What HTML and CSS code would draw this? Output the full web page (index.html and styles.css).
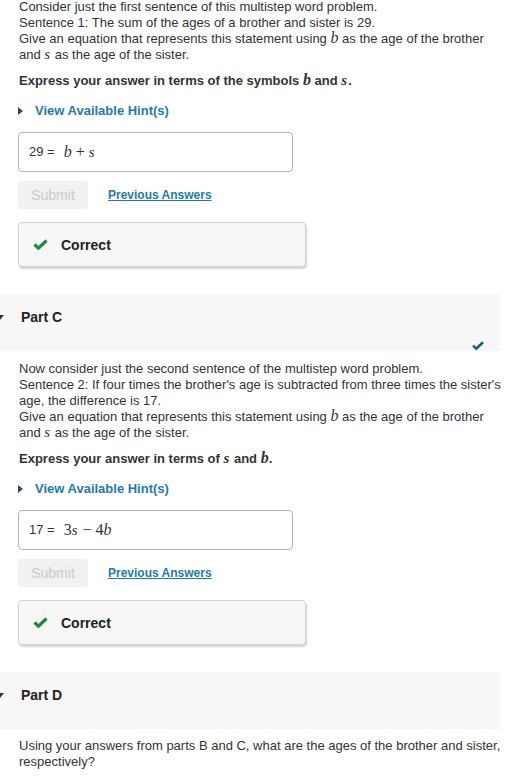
FILE: index.html
```html
<!DOCTYPE html>
<html lang="en">
<head>
<meta charset="utf-8">
<title>Multistep word problem</title>
<link rel="stylesheet" href="styles.css">
</head>
<body>
<div class="page">
  <section class="part-body first">
    <p class="prompt">Consider just the first sentence of this multistep word problem.<br>Sentence 1: The sum of the ages of a brother and sister is 29.<br>Give an equation that represents this statement using <var class="mi">b</var> as the age of the brother and <var class="mi s">s</var> as the age of the sister.</p>
    <p class="express">Express your answer in terms of the symbols <var class="mi">b</var> and <var class="mi s">s</var>.</p>
    <a class="hint" href="#"><span class="hint-caret"></span>View Available Hint(s)</a>
    <div class="answer-box"><span class="lhs">29 =</span><span class="math"><var class="mi">b</var><span class="mo">+</span><var class="mi s">s</var></span></div>
    <div class="actions"><button class="submit" type="button" disabled>Submit</button><a class="prev" href="#">Previous Answers</a></div>
    <div class="feedback">
      <svg class="ok" width="15" height="11" viewBox="0 0 15 11"><path d="M1.5 5.5 L5.5 9.2 L13.5 1.5" fill="none" stroke="#1e8a3e" stroke-width="3.2" stroke-linejoin="miter"/></svg>
      <span>Correct</span>
    </div>
  </section>

  <header class="part-header">
    <div class="part-title"><span class="part-caret"></span><span>Part C</span></div>
    <svg class="part-status" width="12" height="9" viewBox="0 0 12 9"><path d="M1 4.6 L4.3 7.6 L11 1.2" fill="none" stroke="#1b5c78" stroke-width="2.6"/></svg>
  </header>

  <section class="part-body">
    <p class="prompt">Now consider just the second sentence of the multistep word problem.<br>Sentence 2: If four times the brother's age is subtracted from three times the sister's age, the difference is 17.<br>Give an equation that represents this statement using <var class="mi">b</var> as the age of the brother and <var class="mi s">s</var> as the age of the sister.</p>
    <p class="express">Express your answer in terms of <var class="mi s">s</var> and <var class="mi">b</var>.</p>
    <a class="hint" href="#"><span class="hint-caret"></span>View Available Hint(s)</a>
    <div class="answer-box"><span class="lhs">17 =</span><span class="math"><span class="mn">3</span><var class="mi s">s</var><span class="mo">&minus;</span><span class="mn">4</span><var class="mi">b</var></span></div>
    <div class="actions"><button class="submit" type="button" disabled>Submit</button><a class="prev" href="#">Previous Answers</a></div>
    <div class="feedback">
      <svg class="ok" width="15" height="11" viewBox="0 0 15 11"><path d="M1.5 5.5 L5.5 9.2 L13.5 1.5" fill="none" stroke="#1e8a3e" stroke-width="3.2" stroke-linejoin="miter"/></svg>
      <span>Correct</span>
    </div>
  </section>

  <header class="part-header">
    <div class="part-title"><span class="part-caret"></span><span>Part D</span></div>
  </header>

  <section class="part-body last">
    <p class="prompt">Using your answers from parts B and C, what are the ages of the brother and sister, respectively?</p>
  </section>
</div>
</body>
</html>
```

FILE: styles.css
```css
html, body {
  margin: 0;
  padding: 0;
  background: #ffffff;
}

body {
  font-family: "Liberation Sans", Arial, sans-serif;
  font-size: 13px;
  line-height: 16px;
  color: #333333;
}

.page {
  width: 506px;
  display: flex;
  flex-direction: column;
}

.part-body {
  padding-left: 19px;
  display: flex;
  flex-direction: column;
  align-items: flex-start;
  margin-top: 10px;
}

.part-body.first {
  margin-top: -1px;
}

.part-body.last {
  margin-top: 9px;
}

.prompt {
  margin: 0;
}

.mi {
  font-family: "Liberation Serif", "Times New Roman", serif;
  font-style: italic;
  font-size: 16px;
  line-height: 12px;
}

.mi.s {
  font-size: 15px;
  padding-right: 1px;
}

.mn {
  font-family: "Liberation Serif", "Times New Roman", serif;
  font-size: 16px;
  line-height: 12px;
}

.mo {
  font-family: "Liberation Serif", "Times New Roman", serif;
  font-size: 16px;
  line-height: 12px;
  margin: 0 4px;
}

.express {
  margin: 10px 0 0;
  font-weight: bold;
}

.hint {
  margin-top: 14px;
  display: flex;
  align-items: center;
  color: #1f7aa8;
  font-weight: bold;
  text-decoration: none;
}

.hint-caret {
  width: 0;
  height: 0;
  border-top: 4px solid transparent;
  border-bottom: 4px solid transparent;
  border-left: 5px solid #1f4d6b;
  margin-left: -1px;
  margin-right: 12px;
}

.answer-box {
  margin-top: 13px;
  margin-left: -1px;
  box-sizing: border-box;
  width: 275px;
  height: 40px;
  border: 1px solid #b3b3b3;
  border-radius: 4px;
  padding-left: 10px;
  display: flex;
  align-items: center;
}

.lhs {
  margin-right: 9px;
}

.math {
  display: inline-flex;
  align-items: baseline;
}

.actions {
  margin-top: 9px;
  margin-left: -1px;
  display: flex;
  align-items: center;
  gap: 20px;
}

.submit {
  width: 70px;
  height: 28px;
  border: none;
  border-radius: 3px;
  background: #f1f1f1;
  color: #cacaca;
  font-family: "Liberation Sans", Arial, sans-serif;
  font-size: 14px;
  padding: 0;
}

.prev {
  color: #1f7aa8;
  font-weight: bold;
  font-size: 12px;
  text-decoration: underline;
}

.feedback {
  margin-top: 13px;
  margin-left: -1px;
  box-sizing: border-box;
  width: 288px;
  height: 45px;
  background: #f7f7f7;
  border: 1px solid #d2d2d2;
  border-radius: 4px;
  box-shadow: 1px 2px 2px rgba(0, 0, 0, 0.18);
  padding-left: 14px;
  display: flex;
  align-items: center;
  gap: 13px;
  font-weight: bold;
  font-size: 14px;
  color: #222222;
}

.part-header {
  margin-top: 27px;
  width: 500px;
  height: 57px;
  box-sizing: border-box;
  background: #f7f7f7;
  padding: 15px 16px 1px 0;
  display: flex;
  flex-direction: column;
}

.part-title {
  display: flex;
  align-items: center;
  font-weight: bold;
  font-size: 14px;
  color: #222222;
}

.part-caret {
  width: 0;
  height: 0;
  border-left: 4px solid transparent;
  border-right: 4px solid transparent;
  border-top: 5px solid #333333;
  margin-left: -4px;
  margin-right: 17px;
}

.part-status {
  margin-top: auto;
  align-self: flex-end;
}
```
